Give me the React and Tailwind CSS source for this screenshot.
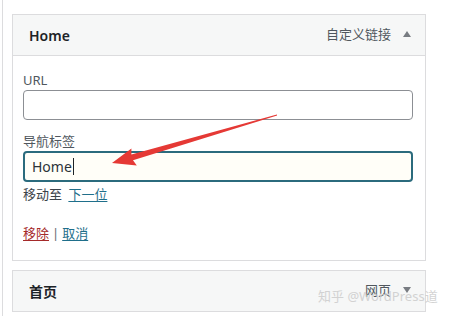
import React from 'react';

const font = { fontFamily: '"Noto Sans", "Noto Sans CJK SC", sans-serif' };

function Header({ title, type, open }) {
  return (
    <div className="h-[40px] flex items-center justify-between pl-[16px] pr-[14px] bg-[#f6f7f7]">
      <span className="text-[14px] font-semibold text-[#1d2327]">{title}</span>
      <div className="flex items-center gap-[12px]">
        <span className="text-[13px] text-[#50575e]">{type}</span>
        <svg width="8" height="6" viewBox="0 0 8 6" className="mt-[-2px]">
          {open ? <path d="M4 0 L8 6 L0 6 Z" fill="#787c82" /> : <path d="M0 0 L8 0 L4 6 Z" fill="#787c82" />}
        </svg>
      </div>
    </div>
  );
}

export default function App() {
  return (
    <div className="relative w-[450px] h-[316px] bg-white overflow-hidden pl-[2px]" style={font}>
      <div className="h-full border-l border-[#dcdcde] pl-[9px] pt-[14px]">
        {/* menu item: Home */}
        <div className="w-[414px] border border-[#dcdcde] bg-white">
          <div className="border-b border-[#dcdcde]">
            <Header title="Home" type="自定义链接" open />
          </div>
          <div className="pl-[10px] pr-[12px] pt-[15px] pb-[18px]">
            <p className="text-[13px] leading-[18px] text-[#50575e]">URL</p>
            <div className="h-[30px] mt-[1px] border border-[#8c8f94] rounded-[4px] bg-white" />
            <p className="text-[13px] leading-[18px] text-[#50575e] mt-[12px]">导航标签</p>
            <div className="h-[31px] mt-[1px] border-2 border-[#2b6b7d] rounded-[4px] bg-[#fffef8] flex items-center pl-[7px]">
              <span className="text-[14px] text-[#2c3338]">Home</span>
              <span className="w-[1px] h-[17px] bg-[#1d2327] ml-[1px]" />
            </div>
            <p className="text-[13px] leading-[18px] text-[#3c434a] mt-[3px]">
              移动至 <span className="ml-[3px] text-[#1f6f8b] underline underline-offset-2">下一位</span>
            </p>
            <p className="text-[13px] leading-[18px] text-[#646970] mt-[21px]">
              <span className="text-[#a52a2a] underline underline-offset-2">移除</span>
              <span className="mx-[3px]">|</span>
              <span className="text-[#1f6f8b] underline underline-offset-2">取消</span>
            </p>
          </div>
        </div>

        {/* menu item: 首页 */}
        <div className="w-[414px] mt-[9px] border border-[#dcdcde]">
          <Header title="首页" type="网页" />
        </div>
      </div>

      {/* annotation arrow */}
      <svg className="absolute left-0 top-0 pointer-events-none" width="450" height="316">
        <polygon
          points="276.9,114.5 131.4,154.5 131.4,148.5 112,163 136.8,165.5 133,160.3 277.1,115.5"
          fill="#e53935"
        />
      </svg>

      {/* watermark */}
      <div className="absolute left-[318px] top-[287px] text-[13px] text-[#cfcfcf] opacity-90 whitespace-nowrap">
        知乎 @WordPress道
      </div>
    </div>
  );
}
